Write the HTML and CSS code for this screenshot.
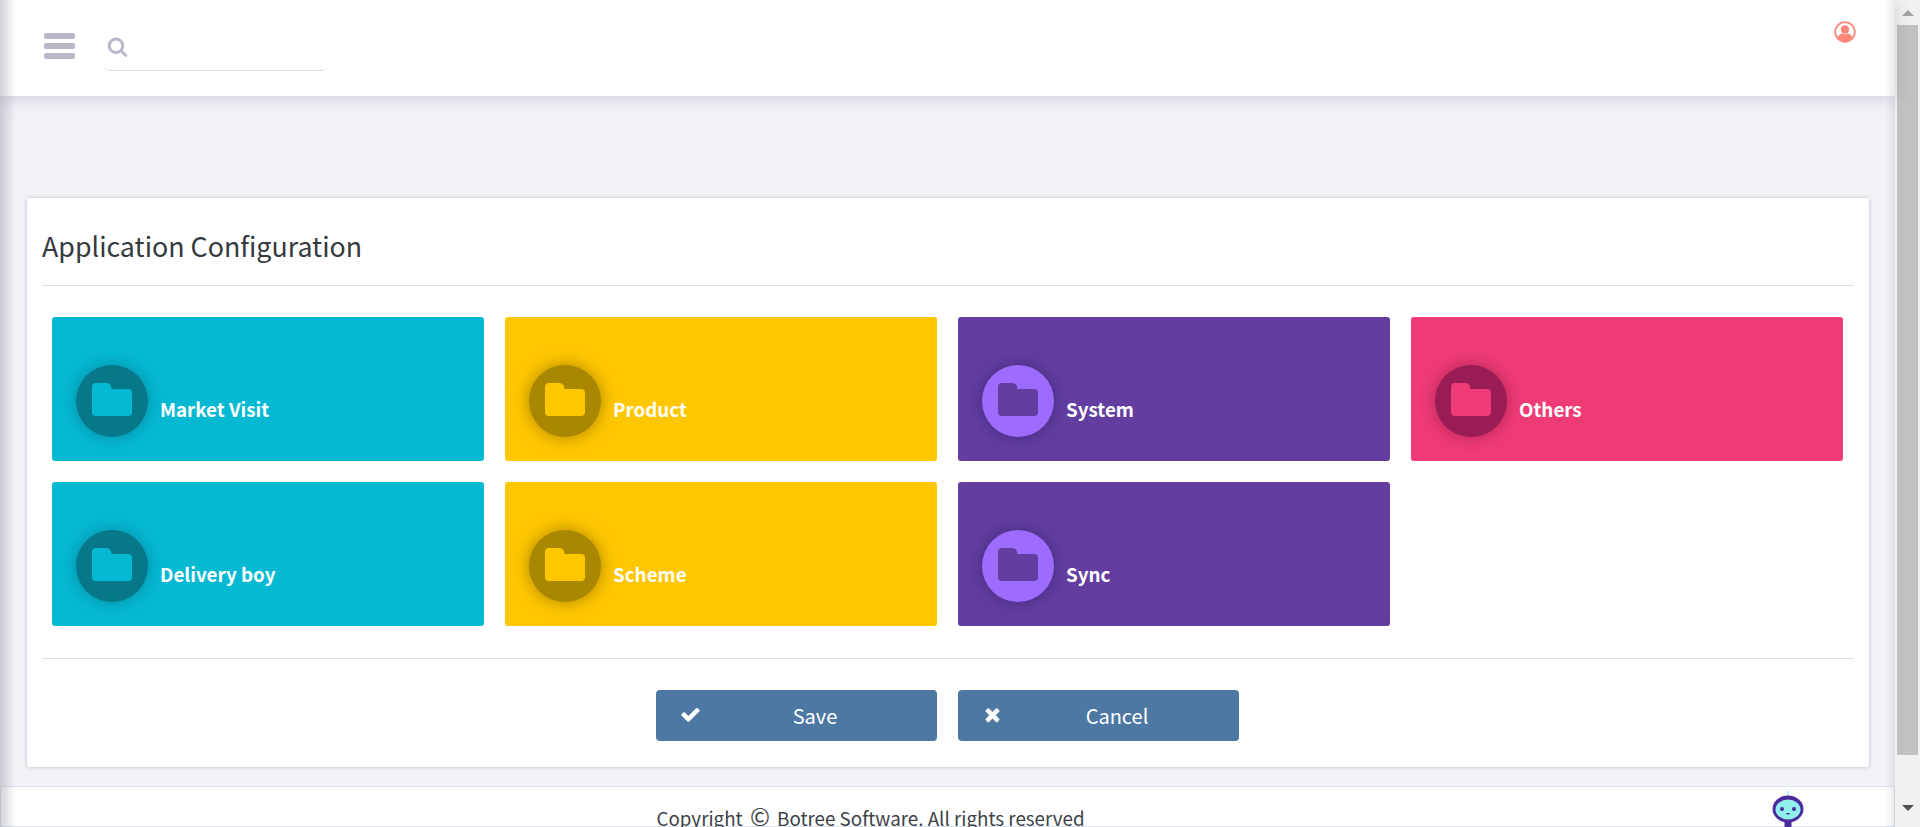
FILE: index.html
```html
<!DOCTYPE html>
<html lang="en">
<head>
    <meta charset="UTF-8" />
    <title>Application Configuration</title>
    <link rel="stylesheet" href="styles.css">
</head>
<body>
    <div class="page">
        <div class="main">
            <div class="side-shade"></div>
            <div class="side-shade right"></div>

            <header class="topbar">
                <div class="menu-icon">
                    <span></span>
                    <span></span>
                    <span></span>
                </div>
                <div class="search">
                    <svg class="search-icon" viewBox="0 0 1792 1792"><path d="M1216 832q0-185-131.500-316.500t-316.500-131.500-316.500 131.500-131.500 316.500 131.500 316.500 316.500 131.500 316.500-131.500 131.500-316.500zm512 832q0 52-38 90t-90 38q-54 0-90-38l-343-342q-179 124-399 124-143 0-273.500-55.500t-225-150-150-225-55.500-273.500 55.500-273.500 150-225 225-150 273.500-55.500 273.500 55.500 225 150 150 225 55.500 273.500q0 220-124 399l343 343q37 37 37 90z"/></svg>
                </div>
                <svg class="user-icon" viewBox="0 0 22 22">
                    <circle cx="11" cy="11" r="9.800" fill="none" stroke="#fd8679" stroke-width="1.800"/>
                    <circle cx="11" cy="8.500" r="4.200" fill="#fd8679"/>
                    <path d="M3.800 16.500c.6-2.800 2.800-4 4.700-4 .8.600 1.600.9 2.500.9s1.700-.3 2.500-.9c1.900 0 4.100 1.200 4.700 4-1.700 2.300-4.300 3.800-7.200 3.800s-5.500-1.500-7.200-3.800z" fill="#fd8679"/>
                </svg>
            </header>

            <section class="card">
                <h2 class="card-title">Application Configuration</h2>

                <div class="tiles">
                    <a class="tile cyan">
                        <span class="tile-circle"><svg class="folder" viewBox="0 0 40 33"><path d="M4 0h10q4 0 5 3.500l.5 2.500h16.500q4 0 4 4v19q0 4-4 4h-32q-4 0-4-4v-25q0-4 4-4z"/></svg></span>
                        <span class="tile-name">Market Visit</span>
                    </a>
                    <a class="tile yellow">
                        <span class="tile-circle"><svg class="folder" viewBox="0 0 40 33"><path d="M4 0h10q4 0 5 3.500l.5 2.500h16.500q4 0 4 4v19q0 4-4 4h-32q-4 0-4-4v-25q0-4 4-4z"/></svg></span>
                        <span class="tile-name">Product</span>
                    </a>
                    <a class="tile purple">
                        <span class="tile-circle"><svg class="folder" viewBox="0 0 40 33"><path d="M4 0h10q4 0 5 3.500l.5 2.500h16.500q4 0 4 4v19q0 4-4 4h-32q-4 0-4-4v-25q0-4 4-4z"/></svg></span>
                        <span class="tile-name">System</span>
                    </a>
                    <a class="tile pink">
                        <span class="tile-circle"><svg class="folder" viewBox="0 0 40 33"><path d="M4 0h10q4 0 5 3.500l.5 2.500h16.500q4 0 4 4v19q0 4-4 4h-32q-4 0-4-4v-25q0-4 4-4z"/></svg></span>
                        <span class="tile-name">Others</span>
                    </a>
                    <a class="tile cyan">
                        <span class="tile-circle"><svg class="folder" viewBox="0 0 40 33"><path d="M4 0h10q4 0 5 3.500l.5 2.500h16.500q4 0 4 4v19q0 4-4 4h-32q-4 0-4-4v-25q0-4 4-4z"/></svg></span>
                        <span class="tile-name">Delivery boy</span>
                    </a>
                    <a class="tile yellow">
                        <span class="tile-circle"><svg class="folder" viewBox="0 0 40 33"><path d="M4 0h10q4 0 5 3.500l.5 2.500h16.500q4 0 4 4v19q0 4-4 4h-32q-4 0-4-4v-25q0-4 4-4z"/></svg></span>
                        <span class="tile-name">Scheme</span>
                    </a>
                    <a class="tile purple">
                        <span class="tile-circle"><svg class="folder" viewBox="0 0 40 33"><path d="M4 0h10q4 0 5 3.500l.5 2.500h16.500q4 0 4 4v19q0 4-4 4h-32q-4 0-4-4v-25q0-4 4-4z"/></svg></span>
                        <span class="tile-name">Sync</span>
                    </a>
                </div>

                <div class="actions">
                    <button class="btn" type="button">
                        <svg class="btn-icon" viewBox="0 0 1792 1792"><path d="M1671 566q0 40-28 68l-724 724-136 136q-28 28-68 28t-68-28l-136-136-362-362q-28-28-28-68t28-68l136-136q28-28 68-28t68 28l294 295 656-657q28-28 68-28t68 28l136 136q28 28 28 68z"/></svg>
                        Save
                    </button>
                    <button class="btn" type="button">
                        <svg class="btn-icon" viewBox="0 0 1792 1792"><path d="M1490 1322q0 40-28 68l-136 136q-28 28-68 28t-68-28l-294-294-294 294q-28 28-68 28t-68-28l-136-136q-28-28-28-68t28-68l294-294-294-294q-28-28-28-68t28-68l136-136q28-28 68-28t68 28l294 294 294-294q28-28 68-28t68 28l136 136q28 28 28 68t-28 68l-294 294 294 294q28 28 28 68z"/></svg>
                        Cancel
                    </button>
                </div>
            </section>

            <footer class="footer">
                <span class="copyright">Copyright <span class="copy-mark">©</span> Botree Software. All rights reserved</span>
                <svg class="bot" viewBox="0 0 32 36">
                    <rect x="15.500" y="0" width="1.300" height="5" fill="#9ff0ee"/>
                    <rect x="12.500" y="28" width="7" height="8" fill="#4a2c9b"/>
                    <ellipse cx="16" cy="18" rx="15.500" ry="13.500" fill="#4a2c9b"/>
                    <ellipse cx="16" cy="18.500" rx="12.500" ry="10" fill="#8ff0ec"/>
                    <circle cx="10" cy="18" r="2" fill="#4a2c9b"/>
                    <circle cx="22" cy="18" r="2" fill="#4a2c9b"/>
                    <path d="M14 22h4q-.5 1.800-2 1.800t-2-1.800z" fill="#4a2c9b"/>
                </svg>
            </footer>
        </div>

        <div class="scrollbar">
            <div class="arrow-up"></div>
            <div class="thumb"></div>
            <div class="arrow-down"></div>
        </div>
    </div>
</body>
</html>
```

FILE: styles.css
```css
html, body {
    margin: 0;
    height: 100%;
    overflow: hidden;
}

body {
    font-family: "Noto Sans CJK SC", "Noto Sans", sans-serif;
    background-color: #f2f2f8;
    color: #343a40;
}

.page {
    display: flex;
    height: 827px;
    overflow: hidden;
}

.main {
    position: relative;
    flex: 1;
    min-width: 0;
    display: flex;
    flex-direction: column;
}

.side-shade {
    position: absolute;
    top: 0;
    left: 0;
    bottom: 0;
    width: 16px;
    background: linear-gradient(to right, rgba(120, 120, 135, 0.32), rgba(120, 120, 135, 0));
    z-index: 3;
}

    .side-shade.right {
        left: auto;
        right: 0;
        width: 10px;
        background: linear-gradient(to left, rgba(120, 120, 135, 0.16), rgba(120, 120, 135, 0));
    }

.topbar {
    flex: none;
    display: flex;
    align-items: flex-start;
    height: 96px;
    background-color: white;
    box-shadow: 0 3px 14px rgba(90, 90, 120, 0.22);
    position: relative;
    z-index: 2;
}

.menu-icon {
    display: flex;
    flex-direction: column;
    gap: 4px;
    width: 31px;
    margin: 33px 0 0 44px;
}

    .menu-icon span {
        display: block;
        height: 6px;
        border-radius: 2px;
        background-color: #b9b8c8;
    }

.search {
    width: 223px;
    height: 34px;
    margin: 36px 0 0 29px;
    border-bottom: 1px solid #d9d9e3;
    border-radius: 0 0 5px 5px;
}

.search-icon {
    display: block;
    width: 21px;
    height: 21px;
    margin-left: 3px;
    fill: #b9b8c8;
}

.user-icon {
    width: 22px;
    height: 22px;
    margin: 21px 39px 0 auto;
}

.card {
    flex: none;
    margin: 102px 26px 0 27px;
    height: 569px;
    padding: 0 15px;
    background-color: white;
    border-radius: 3px;
    box-shadow: 0 0 4px rgba(60, 60, 80, 0.28);
}

.card-title {
    margin: 0;
    height: 88px;
    padding-top: 28px;
    box-sizing: border-box;
    border-bottom: 1px solid #dcdce6;
    font-size: 26.800px;
    line-height: 40px;
    font-weight: 400;
    color: #343a40;
}

.tiles {
    display: grid;
    grid-template-columns: repeat(4, 432px);
    grid-auto-rows: 144px;
    column-gap: 21px;
    row-gap: 21px;
    padding: 31px 10px 32px;
    border-bottom: 1px solid #dcdce6;
}

.tile {
    display: flex;
    align-items: flex-start;
    padding: 48px 0 0 24px;
    box-sizing: border-box;
    border-radius: 3px;
    color: white;
}

.tile-circle {
    flex: none;
    display: flex;
    align-items: center;
    justify-content: center;
    width: 72px;
    height: 72px;
    border-radius: 50%;
}

.folder {
    display: block;
    width: 40px;
    height: 33px;
    margin-top: -4px;
}

.tile-name {
    margin: 30px 0 0 12px;
    font-size: 18.800px;
    line-height: 28px;
    font-weight: 700;
}

.cyan { background-color: #06b9d3; }
.cyan .tile-circle { background-color: #077889; box-shadow: 0 0 16px rgba(4, 90, 105, 0.5); }
.cyan .folder { fill: #06b9d3; }

.yellow { background-color: #ffc700; }
.yellow .tile-circle { background-color: #a98700; box-shadow: 0 0 16px rgba(110, 85, 0, 0.6); }
.yellow .folder { fill: #ffc700; }

.purple { background-color: #633ea0; }
.purple .tile-circle { background-color: #9d6bfd; box-shadow: 0 0 16px rgba(40, 20, 90, 0.5); }
.purple .folder { fill: #633ea0; }

.pink { background-color: #ef3b76; }
.pink .tile-circle { background-color: #9a1c54; box-shadow: 0 0 16px rgba(110, 15, 50, 0.5); }
.pink .folder { fill: #ef3b76; }

.actions {
    display: flex;
    justify-content: center;
    gap: 21px;
    padding: 31px 2px 0 0;
}

.btn {
    position: relative;
    width: 281px;
    height: 51px;
    padding: 0 0 0 38px;
    border: none;
    border-radius: 4px;
    background-color: #4d78a3;
    color: white;
    font-family: inherit;
    font-size: 20px;
    cursor: pointer;
}

.btn-icon {
    position: absolute;
    left: 24px;
    top: 14px;
    width: 21px;
    height: 21px;
    fill: white;
}

.footer {
    position: relative;
    flex: none;
    box-sizing: border-box;
    margin-top: 19px;
    height: 41px;
    border: 1px solid #dde3ea;
    background-color: white;
    text-align: center;
    padding-right: 154px;
    font-size: 18.800px;
    line-height: 30px;
    color: #3d4248;
}

.copyright {
    display: block;
    padding-top: 16px;
}

.copy-mark {
    font-size: 24px;
    line-height: 20px;
    margin: 0 3px;
}

.bot {
    position: absolute;
    top: 4px;
    left: 1771px;
    width: 32px;
    height: 36px;
}

.scrollbar {
    flex: none;
    display: flex;
    flex-direction: column;
    align-items: center;
    width: 25px;
    background-color: #f1f1f1;
}

.arrow-up {
    flex: none;
    width: 0;
    height: 0;
    margin: 10px 0 9px;
    border-left: 6px solid transparent;
    border-right: 6px solid transparent;
    border-bottom: 6px solid #a3a3a3;
}

.thumb {
    flex: none;
    width: 21px;
    height: 730px;
    background-color: #c1c1c1;
}

.arrow-down {
    flex: none;
    width: 0;
    height: 0;
    margin-top: 50px;
    border-left: 6px solid transparent;
    border-right: 6px solid transparent;
    border-top: 6px solid #505050;
}
```
